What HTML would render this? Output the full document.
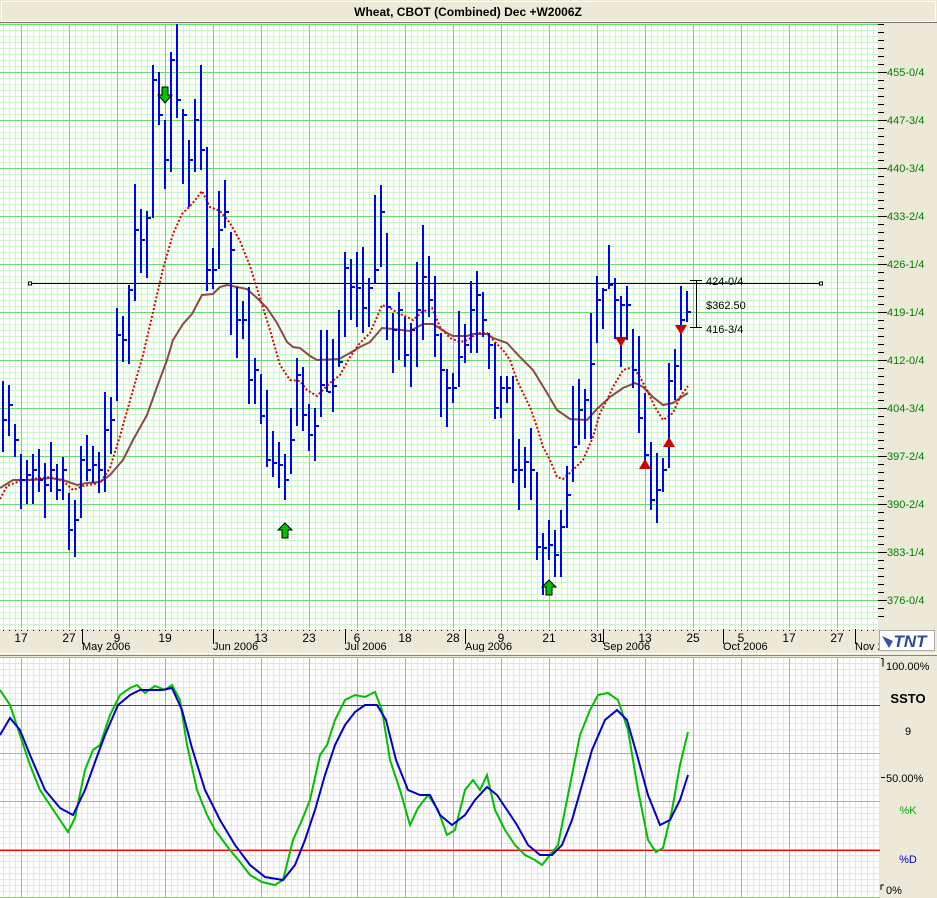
<!DOCTYPE html>
<html><head><meta charset="utf-8"><style>
body{margin:0;width:937px;height:898px;overflow:hidden;background:#ece9d8;font-family:"Liberation Sans",sans-serif;position:relative}
svg{display:block;position:absolute;left:0;top:0}
.grid{position:absolute;background-color:#fff;
background-image:linear-gradient(90deg,#66e066 1px,transparent 1px),linear-gradient(#66e066 1px,transparent 1px),linear-gradient(90deg,#ccf5cc 1px,transparent 1px),linear-gradient(#ccf5cc 1px,transparent 1px);
background-size:48px 48px,48px 48px,6px 6px,6px 6px;}
#g1{left:0;top:24px;width:878px;height:604px;background-position:21px 0,0 0,3px 0,0 0}
#g2{left:0;top:657px;width:880px;height:241px;background-position:21px 0,0 0,3px 0,0 0}
</style></head><body>
<div class="grid" id="g1"></div>
<div class="grid" id="g2"></div>
<svg width="937" height="898" xmlns="http://www.w3.org/2000/svg" font-family="Liberation Sans, sans-serif">
<!-- title -->
<rect x="0" y="0" width="937" height="23" fill="#ece9d8"/>
<rect x="1.5" y="1.5" width="934" height="20" fill="none" stroke="#fff" stroke-width="1"/>
<line x1="0" y1="22.5" x2="937" y2="22.5" stroke="#7a766a"/>
<text x="468" y="16" text-anchor="middle" font-size="12" font-weight="bold">Wheat, CBOT (Combined) Dec +W2006Z</text>
<line x1="0" y1="24.5" x2="878" y2="24.5" stroke="#66e066"/>
<!-- right axis -->
<rect x="878" y="24" width="59" height="604" fill="#ece9d8"/>
<path d="M878 24.5h6M878 32.5h6M878 40.5h6M878 48.5h6M878 56.5h6M878 64.5h6M878 80.5h6M878 88.5h6M878 96.5h6M878 104.5h6M878 112.5h6M878 128.5h6M878 136.5h6M878 144.5h6M878 152.5h6M878 160.5h6M878 176.5h6M878 184.5h6M878 192.5h6M878 200.5h6M878 208.5h6M878 224.5h6M878 232.5h6M878 240.5h6M878 248.5h6M878 256.5h6M878 272.5h6M878 280.5h6M878 288.5h6M878 296.5h6M878 304.5h6M878 320.5h6M878 328.5h6M878 336.5h6M878 344.5h6M878 352.5h6M878 368.5h6M878 376.5h6M878 384.5h6M878 392.5h6M878 400.5h6M878 416.5h6M878 424.5h6M878 432.5h6M878 440.5h6M878 448.5h6M878 464.5h6M878 472.5h6M878 480.5h6M878 488.5h6M878 496.5h6M878 512.5h6M878 520.5h6M878 528.5h6M878 536.5h6M878 544.5h6M878 560.5h6M878 568.5h6M878 576.5h6M878 584.5h6M878 592.5h6M878 608.5h6M878 616.5h6M878 72.5h9M878 120.5h9M878 168.5h9M878 216.5h9M878 264.5h9M878 312.5h9M878 360.5h9M878 408.5h9M878 456.5h9M878 504.5h9M878 552.5h9M878 600.5h9" stroke="#000"/>
<g font-size="11" fill="#008000">
<text x="887" y="76">455-0/4</text><text x="887" y="124">447-3/4</text><text x="887" y="172">440-3/4</text><text x="887" y="220">433-2/4</text><text x="887" y="268">426-1/4</text><text x="887" y="316">419-1/4</text><text x="887" y="364">412-0/4</text><text x="887" y="412">404-3/4</text><text x="887" y="460">397-2/4</text><text x="887" y="508">390-2/4</text><text x="887" y="556">383-1/4</text><text x="887" y="604">376-0/4</text>
</g>
<!-- horizontal black line -->
<line x1="30" y1="283.5" x2="821" y2="283.5" stroke="#000"/>
<rect x="28.5" y="282" width="3" height="3" fill="#fff" stroke="#000"/>
<rect x="819.5" y="282" width="3" height="3" fill="#fff" stroke="#000"/>
<!-- moving averages -->
<polyline fill="none" stroke="#8b4a44" stroke-width="2" points="0,488 13,480 33,480 50,478 63,480 77,485 87,483 100,482 110,475 123,460 133,440 147,415 157,387 167,360 173,340 183,324 192,314 202,295 213,294 220,287 227,285 237,287 247,289 257,298 267,308 277,323 287,342 293,347 300,348 310,356 317,360 339,359 350,353 360,347 370,342 382,328 393,329 410,331 423,324 433,324 447,333 453,336 467,336 473,334 487,334 493,338 507,343 520,357 533,370 547,393 557,410 570,419 587,420 597,409 610,397 623,388 635,383 643,387 653,397 663,405 673,403 680,398 688,393"/>
<polyline fill="none" stroke="#e00000" stroke-width="2" stroke-dasharray="2 2" points="0,499 7,486 20,481 33,479 50,477 63,481 73,490 83,486 100,483 110,468 120,436 133,390 143,355 153,312 163,269 173,234 182,214 192,204 202,191 210,207 220,211 230,223 240,241 250,266 260,298 270,330 280,365 290,380 300,381 307,390 317,396 330,383 340,375 350,357 360,343 370,333 377,317 382,305 390,308 398,313 407,317 413,320 422,312 432,308 440,327 450,338 460,342 468,340 477,333 487,333 493,340 503,350 510,360 517,380 523,393 530,407 537,427 543,447 550,460 557,477 563,479 573,470 583,460 593,437 600,413 607,400 613,387 623,370 633,367 640,377 647,390 655,407 663,420 673,413 680,397 688,386"/>
<!-- bars -->
<path fill="none" stroke="#0000ff" stroke-width="2" d="M3 381V452M9 385V436M15 424V457M21 454V509M27 460V504M33 454V504M39 449V492M45 463V518M51 442V492M57 464V500M63 457V500M69 493V550M75 500V557M81 446V518M87 435V481M93 446V483M99 452V493M105 392V492M111 397V454M117 308V401M123 316V362M129 285V364M135 184V301M141 209V273M147 211V278M153 65V218M159 72V125M165 120V189M171 52V172M177 24V118M183 109V184M189 140V207M195 99V172M201 65V170M207 147V291M213 248V289M219 191V269M225 180V228M231 232V335M237 287V358M243 301V339M249 287V404M255 358V404M261 374V424M267 390V467M273 431V477M279 442V488M285 454V500M291 408V474M297 358V426M303 367V431M309 404V451M315 408V461M321 330V417M327 330V392M333 339V412M339 310V367M345 252V337M351 259V320M357 252V327M363 247V333M369 278V327M375 195V283M381 185V267M387 233V340M393 313V373M399 292V360M405 317V367M411 323V387M417 262V367M423 225V340M429 256V317M435 276V357M441 333V417M447 369V427M453 373V403M459 311V387M465 324V363M471 281V353M477 271V353M483 292V337M489 333V369M495 343V419M501 376V418M507 376V403M513 376V483M519 439V510M525 447V488M531 428V500M537 472V560M543 533V595M549 520V560M555 530V577M561 510V577M567 466V528M573 386V482M579 379V445M585 389V439M591 313V439M597 276V343M603 288V329M609 245V289M615 278V339M621 296V367M627 286V340M633 329V388M639 336V433M645 393V465M651 442V510M657 453V523M663 458V492M669 363V468M675 349V400M681 286V390M687 291V322"/>
<path fill="none" stroke="#0000ff" stroke-width="2" d="M4 420h3M10 405h3M16 440h3M22 480h3M28 475h3M34 470h3M40 480h3M46 485h3M52 470h3M58 490h3M64 470h3M70 530h3M76 520h3M82 460h3M88 470h3M94 465h3M100 470h3M106 430h3M112 420h3M118 335h3M124 340h3M130 290h3M136 230h3M142 240h3M148 218h3M154 80h3M160 115h3M166 160h3M172 60h3M178 100h3M184 115h3M190 160h3M196 120h3M202 150h3M208 270h3M214 270h3M220 230h3M226 212h3M232 250h3M238 320h3M244 320h3M250 380h3M256 370h3M262 416h3M268 460h3M274 463h3M280 465h3M286 480h3M292 440h3M298 375h3M304 415h3M310 435h3M316 426h3M322 385h3M328 392h3M334 386h3M340 362h3M346 268h3M352 287h3M358 288h3M364 308h3M370 288h3M376 270h3M382 212h3M388 307h3M394 330h3M400 310h3M406 355h3M412 330h3M418 310h3M424 277h3M430 300h3M436 335h3M442 370h3M448 388h3M454 388h3M460 357h3M466 345h3M472 310h3M478 295h3M484 320h3M490 345h3M496 408h3M502 388h3M508 388h3M514 470h3M520 470h3M526 462h3M532 470h3M538 547h3M544 548h3M550 545h3M556 555h3M562 527h3M568 495h3M574 447h3M580 410h3M586 400h3M592 364h3M598 300h3M604 290h3M610 285h3M616 300h3M622 305h3M628 305h3M634 370h3M640 418h3M646 455h3M652 500h3M658 490h3M664 470h3M670 381h3M676 366h3M682 320h3M688 312h3"/>
<!-- markers -->
<path d="M162 87h6v8h4l-7 8l-7-8h4z" fill="#00c000" stroke="#000" stroke-width="1"/>
<path d="M285 523l7 7h-4v8h-6v-8h-4z" fill="#00c000" stroke="#000" stroke-width="1"/>
<path d="M549 580l7 7h-4v8h-6v-8h-4z" fill="#00c000" stroke="#000" stroke-width="1"/>
<path d="M615 337h12l-6 10z" fill="#cc0000"/>
<path d="M675 325h12l-6 10z" fill="#cc0000"/>
<path d="M639 469h12l-6-10z" fill="#cc0000"/>
<path d="M663 447h12l-6-10z" fill="#cc0000"/>
<!-- measurement -->
<path d="M696.5 280V328M690 280.5h12M690 327.5h12" stroke="#000" fill="none"/>
<g font-size="11" fill="#000"><text x="706" y="285">424-0/4</text><text x="706" y="309">$362.50</text><text x="706" y="333">416-3/4</text></g>
<!-- date axis -->
<rect x="0" y="628" width="878" height="24" fill="#ece9d8"/>
<line x1="0" y1="628.5" x2="878" y2="628.5" stroke="#fff"/>
<line x1="3" y1="630.5" x2="878" y2="630.5" stroke="#000" stroke-dasharray="1 5"/>
<path d="M82.5 629v15M213.5 629v15M345.5 629v15M465.5 629v15M603.5 629v15M723.5 629v15M855.5 629v15" stroke="#000"/>
<g font-size="12" fill="#000" text-anchor="middle">
<text x="21" y="642">17</text><text x="69" y="642">27</text><text x="117" y="642">9</text><text x="165" y="642">19</text><text x="261" y="642">13</text><text x="309" y="642">23</text><text x="357" y="642">6</text><text x="405" y="642">18</text><text x="453" y="642">28</text><text x="501" y="642">9</text><text x="549" y="642">21</text><text x="597" y="642">31</text><text x="645" y="642">13</text><text x="693" y="642">25</text><text x="741" y="642">5</text><text x="789" y="642">17</text><text x="837" y="642">27</text>
</g>
<g font-size="11" fill="#000">
<text x="82" y="650">May 2006</text><text x="213" y="650">Jun 2006</text><text x="345" y="650">Jul 2006</text><text x="465" y="650">Aug 2006</text><text x="603" y="650">Sep 2006</text><text x="723" y="650">Oct 2006</text><text x="855" y="650">Nov 2</text>
</g>
<!-- TNT logo -->
<rect x="879.5" y="630.5" width="55" height="20" fill="#fff" stroke="#aaa"/>
<path d="M882 636l7 12l4-7z" fill="#3355aa"/>
<text x="910" y="647" text-anchor="middle" font-size="17" font-weight="bold" font-style="italic" fill="#2a4a9a">TNT</text>
<!-- separator -->
<rect x="0" y="652" width="937" height="5" fill="#ece9d8"/>
<line x1="0" y1="653.5" x2="937" y2="653.5" stroke="#fff"/>
<line x1="0" y1="655.5" x2="937" y2="655.5" stroke="#8a877c"/>
<!-- lower panel -->
<path d="M21.5 657V898M69.5 657V898M117.5 657V898M165.5 657V898M213.5 657V898M261.5 657V898M309.5 657V898M357.5 657V898M405.5 657V898M453.5 657V898M501.5 657V898M549.5 657V898M597.5 657V898M645.5 657V898M693.5 657V898M741.5 657V898M789.5 657V898M837.5 657V898M0 753.5H880M0 801.5H880" stroke="#66e066" fill="none"/>
<rect x="880" y="657" width="57" height="241" fill="#ece9d8"/>
<line x1="0" y1="705.5" x2="880" y2="705.5" stroke="#ff0000"/>
<line x1="0" y1="850.5" x2="880" y2="850.5" stroke="#ff0000"/>
<path d="M881 658.5h2v8M881 777.5h4M881 890v-5h3" stroke="#000" fill="none"/>
<polyline fill="none" stroke="#00c000" stroke-width="2" points="0,690 10,705 20,735 30,765 40,790 50,805 60,820 68,832 75,818 85,770 93,750 100,745 110,715 120,695 130,688 137,685 145,693 155,686 165,690 172,685 180,700 187,745 197,790 207,815 215,830 230,850 240,862 250,875 262,882 275,885 283,880 293,840 302,820 310,800 320,755 327,745 335,720 345,700 355,695 365,697 375,692 382,710 390,760 400,790 410,825 418,808 428,795 438,810 447,835 455,830 465,790 473,780 480,790 487,775 495,810 505,830 515,845 525,855 535,860 542,865 550,855 558,845 570,785 580,735 590,710 598,695 608,693 618,700 628,730 638,790 648,840 656,852 663,848 672,810 680,765 688,732"/>
<polyline fill="none" stroke="#0000cc" stroke-width="2" points="0,735 10,718 20,730 30,755 45,790 60,808 73,815 85,790 95,762 105,735 118,705 130,695 140,690 150,690 162,690 172,688 182,710 192,748 205,790 220,820 235,845 250,865 265,877 283,880 295,865 305,840 315,810 325,775 335,745 345,725 355,712 365,705 377,705 386,720 396,760 408,790 420,795 430,795 440,815 452,825 465,815 475,800 487,787 497,795 507,810 517,825 528,845 540,855 552,855 562,845 572,820 582,785 592,750 605,720 617,710 627,720 637,755 648,795 660,825 670,820 680,800 688,775"/>
<g font-size="11" fill="#000">
<text x="886" y="670">100.00%</text>
<text x="886" y="782">50.00%</text>
<text x="886" y="894">0%</text>
</g>
<text x="908" y="703" text-anchor="middle" font-size="13" font-weight="bold">SSTO</text>
<text x="908" y="735" text-anchor="middle" font-size="11">9</text>
<text x="908" y="814" text-anchor="middle" font-size="11" fill="#00b000">%K</text>
<text x="908" y="863" text-anchor="middle" font-size="11" fill="#0000cc">%D</text>
</svg>
</body></html>
